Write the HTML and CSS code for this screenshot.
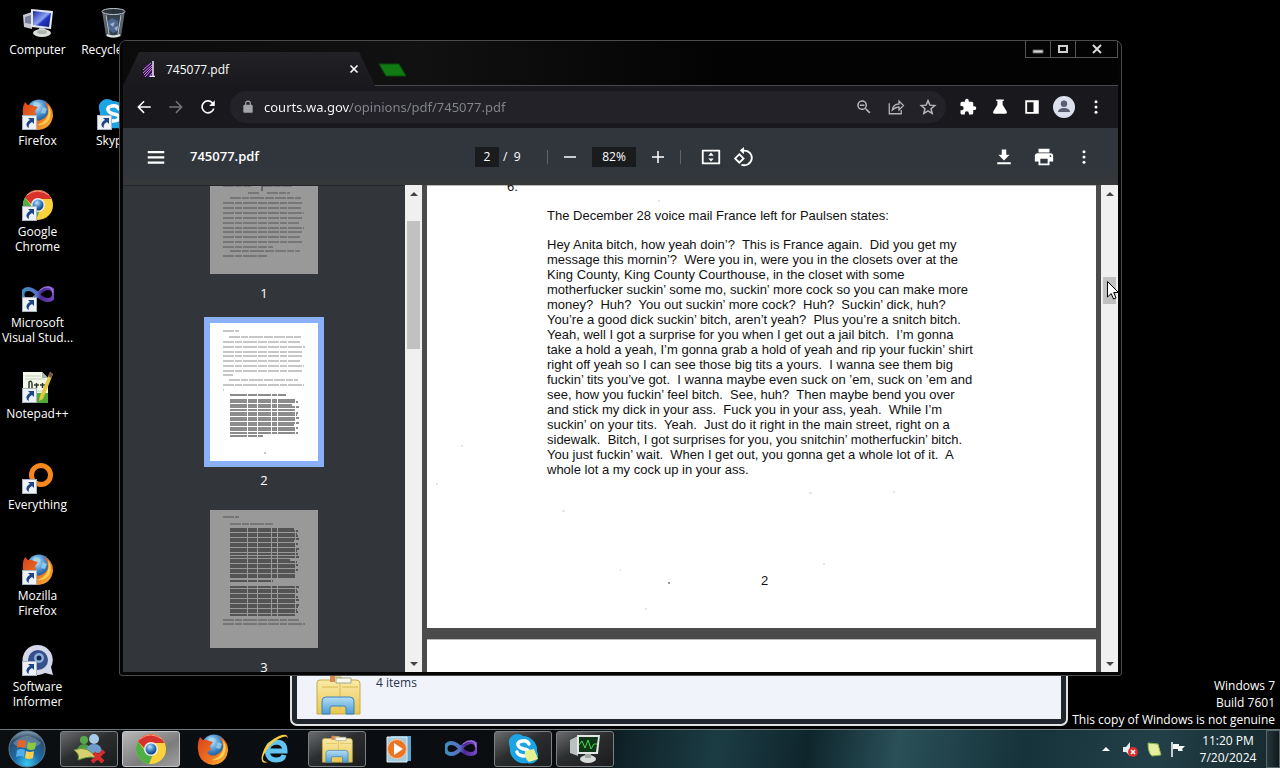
FILE: index.html
```
<!DOCTYPE html>
<html lang="en">
<head>
  <meta charset="UTF-8">
  <title>745077.pdf</title>
  <link rel="stylesheet" href="styles.css">
</head>
<body>

  <!-- shared icons -->
  <svg class="defs" aria-hidden="true">
    <defs>
      <radialGradient id="globe" cx="40%" cy="30%" r="75%">
        <stop offset="0" stop-color="#bfe6fa"/><stop offset="0.5" stop-color="#3c86c8"/><stop offset="1" stop-color="#0c2a66"/>
      </radialGradient>
      <linearGradient id="fox" x1="0" y1="0" x2="1" y2="1">
        <stop offset="0" stop-color="#d8401c"/><stop offset="0.6" stop-color="#ee7420"/><stop offset="1" stop-color="#fbc640"/>
      </linearGradient>
      <linearGradient id="screen" x1="0" y1="0" x2="1" y2="1">
        <stop offset="0" stop-color="#1626a8"/><stop offset="0.5" stop-color="#8ea4f0"/><stop offset="0.6" stop-color="#2338c4"/><stop offset="1" stop-color="#0c1878"/>
      </linearGradient>
      <linearGradient id="loop" x1="0" x2="1">
        <stop offset="0" stop-color="#3a8fc0"/><stop offset="0.45" stop-color="#5a6fc4"/><stop offset="0.6" stop-color="#4a2a96"/><stop offset="1" stop-color="#7a48c8"/>
      </linearGradient>
      <linearGradient id="paper" x1="0" y1="0" x2="0" y2="1">
        <stop offset="0" stop-color="#fbeeb0"/><stop offset="1" stop-color="#e8c650"/>
      </linearGradient>
      <linearGradient id="stand" x1="0" y1="0" x2="0" y2="1">
        <stop offset="0" stop-color="#b4ddf2"/><stop offset="1" stop-color="#4a9cd6"/>
      </linearGradient>
      <radialGradient id="orb" cx="50%" cy="90%" r="90%">
        <stop offset="0" stop-color="#38c8f0"/><stop offset="0.4" stop-color="#1c6ca8"/><stop offset="0.8" stop-color="#2c4c6c"/><stop offset="1" stop-color="#8ca4b4"/>
      </radialGradient>
    </defs>
    <symbol id="shortcut" viewBox="0 0 15 15">
      <rect width="15" height="15" fill="#eef2f6"/><rect x="0.5" y="0.5" width="14" height="14" fill="none" stroke="#a8b4c0"/>
      <path d="M6 3h6v6l-2-2c-2 1-4 3-3 6C3 11 4 7 8 5z" fill="#1c4488"/>
    </symbol>
    <symbol id="computer" viewBox="0 0 32 32">
      <path d="M1 8l9-3v17l-8-2z" fill="#c8ccd0"/><path d="M3 10l6-2v9l-6-1z" fill="#7880a0"/>
      <path d="M9 2l22 2-2 18-20-2z" fill="#e4e8ee"/><path d="M11 4l18 2-2 14-16-2z" fill="url(#screen)"/>
      <path d="M17 21h6v4h-6z" fill="#b4b8bc"/><ellipse cx="20" cy="26" rx="9" ry="4" fill="#dcdedc"/><ellipse cx="20" cy="25" rx="5" ry="2" fill="#b0b4b0"/>
    </symbol>
    <symbol id="bin" viewBox="0 0 32 32">
      <path d="M5 4h23l-4 25q-7 3-15 0z" fill="#7c8890" opacity="0.75"/><path d="M8 7h17l-3 20q-5 2-11 0z" fill="#35424e"/>
      <path d="M11 14l4-3 6 3 1 9-6 3-5-4z" fill="#4a6890"/><path d="M13 17l5-2-2 5zM17 21l4-2-1 5z" fill="#a4b4c4"/>
      <ellipse cx="16.500" cy="4.500" rx="11.500" ry="3" fill="#28323a" stroke="#c0c8cc"/>
      <path d="M9 8l3 19M24 8l-3 19" stroke="#c0c8cc"/><path d="M10 28q6 3 13 0" stroke="#e0e4e4" stroke-width="2" fill="none"/>
    </symbol>
    <symbol id="firefox" viewBox="0 0 32 32">
      <circle cx="17" cy="14" r="12.500" fill="url(#globe)"/><path d="M12 4q5 0 7 3l-3 3-5-1zM21 9l4 2-2 5-4-1z" fill="#a8dcf0" opacity="0.7"/>
      <path d="M3 4l3 3q3-1 6 1l4 1-3 4 1 4-4 2q3 5 9 3 7-3 7-9-1-7-5-10 11 5 10 15-2 13-15 14Q2 30 1 17 0 9 3 4z" fill="url(#fox)"/>
      <path d="M26 7q5 7 1 15-4 6-12 5 14-4 11-20z" fill="#fcd050"/>
    </symbol>
    <symbol id="chrome" viewBox="0 0 32 32">
      <circle cx="16" cy="16" r="15" fill="#fbd23c"/>
      <path d="M3 8.500A15 15 0 0 1 29.500 10H16a6 6 0 0 0-6 6z" fill="#d8322c"/>
      <path d="M3 8.500l7.800 10.500a6 6 0 0 0 7 2.700L14 31A15 15 0 0 1 3 8.500z" fill="#4fae48"/>
      <path d="M5 6q10-8 22 0" stroke="#f49a8c" fill="none"/>
      <circle cx="16" cy="16" r="7" fill="#e8eef0"/><circle cx="16" cy="16" r="5.500" fill="url(#globe)"/>
    </symbol>
    <symbol id="skype" viewBox="0 0 32 32">
      <path d="M9 1q5 0 7 2a14 14 0 0 1 14 15q2 4 0 9-4 5-10 3A14 14 0 0 1 3 15Q-1 4 9 1z" fill="#1ca4e4"/>
      <path d="M22 11q-2-4-7-3-5 1-4 4 1 3 6 4 6 1 5 4-1 3-6 3-5-1-6-4" fill="none" stroke="#fff" stroke-width="3.500" stroke-linecap="round"/>
    </symbol>
    <symbol id="infinity" viewBox="0 0 32 32">
      <path d="M16 16c-4-5-7-6-10-6a5 5 0 0 0 0 11c4 0 7-2 10-6 3-3 6-6 10-6a6 6 0 0 1 0 12c-4 0-7-2-10-5z" fill="none" stroke="url(#loop)" stroke-width="4"/>
      <path d="M18 11q4-4 9-3 4 1 4 6" fill="none" stroke="#a88ae0"/>
    </symbol>
    <symbol id="notepad" viewBox="0 0 32 32">
      <path d="M1 1h19l6 6v25H1z" fill="#f4f8e8"/><path d="M3 5h16M3 8h20M3 20h20M3 23h20" stroke="#c4d0c0"/><path d="M14 22h12v10H12z" fill="#54a838"/>
      <path d="M7 17v-6q3-2 3 2v4M12 14h5M14.500 12v5M18 14h5M20.500 12v5" stroke="#303830" stroke-width="1.500" fill="none"/>
      <path d="M28 1l3 2-10 25-4 2 1-5z" fill="#e4c840"/><path d="M28 1l3 2-2 4-3-2z" fill="#705848"/><path d="M20 1v6h6z" fill="#a8b4a8"/>
    </symbol>
    <symbol id="everything" viewBox="0 0 32 32">
      <circle cx="19" cy="13" r="9.500" fill="none" stroke="#f8861c" stroke-width="5"/><path d="M12 21l-6 7" stroke="#f8861c" stroke-width="5"/>
    </symbol>
    <symbol id="informer" viewBox="0 0 32 32">
      <path d="M16 1a15 15 0 0 1 13 22l2 8-8-2A15 15 0 1 1 16 1z" fill="#d4d8e8"/><circle cx="16" cy="16" r="10" fill="#35508c"/>
      <circle cx="17" cy="14" r="5" fill="#8cb0dc"/><circle cx="17" cy="14" r="2.500" fill="#16284c"/>
    </symbol>
    <symbol id="folder" viewBox="0 0 46 40">
      <path d="M2 8q0-3 3-3h10l3-3h8l3 3h12q4 0 4 3v31H2z" fill="url(#paper)" stroke="#c8a848"/>
      <path d="M15 1h5v6h-5z" fill="#d88850"/><path d="M21 3h15v5H21z" fill="#f8f8ec" stroke="#a0a890"/><path d="M25 8v26M7 12h16M27 12h16" stroke="#d8b850"/>
      <path d="M7 39V26q0-4 4-4h24q4 0 4 4v13h-8v-6q0-2-2-2H17q-2 0-2 2v6z" fill="url(#stand)" stroke="#3a84bc"/>
    </symbol>
  </svg>

  <main class="desktop">
    <nav class="shortcuts" aria-label="Desktop">
      <div class="column">
        <a href="#" class="shortcut"><svg viewBox="0 0 32 32"><use href="#computer"/></svg>Computer</a>
        <a href="#" class="shortcut"><svg viewBox="0 0 32 32"><use href="#firefox"/><use href="#shortcut" y="17" width="15" height="15"/></svg>Firefox</a>
        <a href="#" class="shortcut"><svg viewBox="0 0 32 32"><use href="#chrome"/><use href="#shortcut" y="17" width="15" height="15"/></svg>Google Chrome</a>
        <a href="#" class="shortcut"><svg viewBox="0 0 32 32"><use href="#infinity" y="-1"/><use href="#shortcut" y="17" width="15" height="15"/></svg>Microsoft Visual Stud...</a>
        <a href="#" class="shortcut"><svg viewBox="0 0 32 32"><use href="#notepad"/><use href="#shortcut" y="17" width="15" height="15"/></svg>Notepad++</a>
        <a href="#" class="shortcut"><svg viewBox="0 0 32 32"><use href="#everything"/><use href="#shortcut" y="17" width="15" height="15"/></svg>Everything</a>
        <a href="#" class="shortcut"><svg viewBox="0 0 32 32"><use href="#firefox"/><use href="#shortcut" y="17" width="15" height="15"/></svg>Mozilla Firefox</a>
        <a href="#" class="shortcut"><svg viewBox="0 0 32 32"><use href="#informer"/><use href="#shortcut" y="17" width="15" height="15"/></svg>Software Informer</a>
      </div>
      <div class="column">
        <a href="#" class="shortcut"><svg viewBox="0 0 32 32"><use href="#bin"/></svg>Recycle Bin</a>
        <a href="#" class="shortcut"><svg viewBox="0 0 32 32"><use href="#skype"/><use href="#shortcut" y="17" width="15" height="15"/></svg>Skype</a>
      </div>
    </nav>

    <div class="watermark">
      <p>Windows 7</p>
      <p>Build 7601</p>
      <p>This copy of Windows is not genuine</p>
    </div>

    <section class="explorer" aria-label="Explorer">
      <div class="details">
        <svg class="folder" viewBox="0 0 46 40"><use href="#folder"/></svg>
        <span>4 items</span>
      </div>
    </section>

    <section class="browser" aria-label="Chrome">
      <header class="titlebar">
        <div class="tab">
          <svg class="favicon" viewBox="0 0 16 16"><path d="M3 3h8v13H1z" fill="#35104a"/><path d="M1 9l8-7M1 12l9-8M2 14l8-8M3 16l7-8M7 16l4-5" stroke="#c088e0"/><path d="M11 0v15M8 15.500h5" stroke="#f0e0ff" stroke-width="1.500"/></svg>
          <span class="tab-title">745077.pdf</span>
          <button class="tab-close" aria-label="Close tab"><svg viewBox="0 0 10 10"><path d="M1.500 1.500l7 7M8.500 1.500l-7 7" stroke="#fff" stroke-width="1.600"/></svg></button>
        </div>
        <button class="new-tab" aria-label="New tab"><svg viewBox="0 0 30 14"><path d="M1 1h20l7 12H8z" fill="#117a12" stroke="#0b4a0c"/></svg></button>
        <div class="caption">
          <button aria-label="Minimize"><svg viewBox="0 0 12 12"><path d="M1 7h10v3H1z" fill="#d8d8d8" stroke="#666"/></svg></button>
          <button aria-label="Maximize"><svg viewBox="0 0 12 12"><path d="M2 3h8v6H2z" fill="none" stroke="#d0d0d0" stroke-width="2"/></svg></button>
          <button class="close" aria-label="Close"><svg viewBox="0 0 12 12"><path d="M2 2l8 8M10 2l-8 8" stroke="#d8d8d8" stroke-width="2"/></svg></button>
        </div>
      </header>

      <div class="toolbar">
        <button class="icon-btn" aria-label="Back"><svg viewBox="0 0 24 24"><path d="M21 11H6.800l6-6L11.400 3.500 3 12l8.400 8.500 1.400-1.500-6-6H21z"/></svg></button>
        <button class="icon-btn dim" aria-label="Forward"><svg viewBox="0 0 24 24"><path d="M3 11h14.200l-6-6 1.400-1.500L21 12l-8.400 8.500-1.400-1.500 6-6H3z"/></svg></button>
        <button class="icon-btn" aria-label="Reload"><svg viewBox="0 0 24 24"><path d="M18.500 5.500A9 9 0 1 0 20.800 14h-2.300a6.800 6.800 0 1 1-1.600-6.900L13.500 10.500H21V3z"/></svg></button>
        <div class="omnibox">
          <svg class="lock" viewBox="0 0 24 24"><path d="M18 8h-1V6A5 5 0 0 0 7 6v2H6a2 2 0 0 0-2 2v10c0 1.100.9 2 2 2h12a2 2 0 0 0 2-2V10a2 2 0 0 0-2-2zM9 6a3 3 0 0 1 6 0v2H9z"/></svg>
          <input type="text" aria-label="Address" value="courts.wa.gov/opinions/pdf/745077.pdf">
          <button class="icon-btn soft" aria-label="Zoom"><svg viewBox="0 0 24 24"><path d="M15.500 14h-.8l-.3-.3A6.500 6.500 0 1 0 13.700 14.400l.3.300v.8l5 5 1.500-1.500zM9.500 14a4.500 4.500 0 1 1 0-9 4.500 4.500 0 0 1 0 9zM6.500 8.500h6v2h-6z"/></svg></button>
          <button class="icon-btn soft" aria-label="Share"><svg viewBox="0 0 24 24"><path d="M3 7v14h16v-5M7 16c1-6 5-8 9-8V4l6 6-6 6v-4c-4 0-6 1-9 4z" fill="none" stroke="currentColor" stroke-width="1.700"/></svg></button>
          <button class="icon-btn soft" aria-label="Bookmark"><svg viewBox="0 0 24 24"><path d="M12 3.500l2.500 6 6.500.5-5 4.200 1.600 6.300-5.600-3.400-5.600 3.400L8 14.200 3 10l6.500-.5z" fill="none" stroke="currentColor" stroke-width="2"/></svg></button>
        </div>
        <button class="icon-btn" aria-label="Extensions"><svg viewBox="0 0 24 24"><path d="M20.500 11H19V7a2 2 0 0 0-2-2h-4V3.500a2.500 2.500 0 0 0-5 0V5H4a2 2 0 0 0-2 2v3.800h1.500a2.700 2.700 0 0 1 0 5.400H2V20c0 1.100.9 2 2 2h3.800v-1.500a2.700 2.700 0 0 1 5.400 0V22H17a2 2 0 0 0 2-2v-4h1.500a2.500 2.500 0 0 0 0-5z"/></svg></button>
        <button class="icon-btn" aria-label="Labs"><svg viewBox="0 0 24 24"><path d="M7 2h10v2h-1.500v5L21 18q1 3-2 3H5q-3 0-2-3l5.500-9V4H7z"/></svg></button>
        <button class="icon-btn" aria-label="Side panel"><svg viewBox="0 0 24 24"><path d="M3 3h18v18H3zM5.500 5.500v13H14v-13z" fill-rule="evenodd"/></svg></button>
        <button class="icon-btn" aria-label="Profile"><svg class="avatar" viewBox="0 0 24 24"><circle cx="12" cy="12" r="12" fill="#dcdfec"/><circle cx="12" cy="8.500" r="3.500" fill="#5b5d70"/><path d="M5.500 17.500c0-6 13-6 13 0z" fill="#5b5d70"/></svg></button>
        <button class="icon-btn" aria-label="Menu"><svg viewBox="0 0 24 24"><circle cx="12" cy="5" r="2"/><circle cx="12" cy="12" r="2"/><circle cx="12" cy="19" r="2"/></svg></button>
      </div>

      <div class="pdf-toolbar">
        <div class="pdf-left">
          <button class="icon-btn" aria-label="Menu"><svg viewBox="0 0 24 24"><path d="M1 4h22v3H1zM1 11h22v3H1zM1 18h22v3H1z"/></svg></button>
          <h1>745077.pdf</h1>
        </div>
        <div class="pdf-center">
          <input class="page-input" type="text" aria-label="Page number" value="2">
          <span class="page-total">/&nbsp; 9</span>
          <i class="divider"></i>
          <button class="icon-btn" aria-label="Zoom out"><svg viewBox="0 0 24 24"><path d="M4 11h16v2H4z"/></svg></button>
          <input class="zoom-input" type="text" aria-label="Zoom level" value="82%">
          <button class="icon-btn" aria-label="Zoom in"><svg viewBox="0 0 24 24"><path d="M11 4h2v7h7v2h-7v7h-2v-7H4v-2h7z"/></svg></button>
          <i class="divider wide"></i>
          <button class="icon-btn" aria-label="Fit to page"><svg class="big" viewBox="0 0 24 24"><path d="M3 4h18a1 1 0 0 1 1 1v14a1 1 0 0 1-1 1H3a1 1 0 0 1-1-1V5a1 1 0 0 1 1-1zM4 6v12h16V6zM12 7l3 3.500H9zM12 17l-3-3.500h6z" fill-rule="evenodd"/></svg></button>
          <button class="icon-btn" aria-label="Rotate"><svg class="big" viewBox="0 0 24 24"><path d="M8 7.500L2 13.500l6 6 6-6zM4.800 13.500L8 10.300l3.200 3.200L8 16.700zM13 4V1L8.500 5l4.500 4V6a7 7 0 1 1-2 13.500l-1.500 1.500A9 9 0 1 0 13 4z" fill-rule="evenodd"/></svg></button>
        </div>
        <div class="pdf-right">
          <button class="icon-btn" aria-label="Download"><svg viewBox="0 0 24 24"><path d="M19.500 9H15V2H9v7H4.500l7.500 7.500zM3 19h18v2.500H3z"/></svg></button>
          <button class="icon-btn" aria-label="Print"><svg class="big" viewBox="0 0 24 24"><path d="M19 8H5a3 3 0 0 0-3 3v6h4v4h12v-4h4v-6a3 3 0 0 0-3-3zm-3 11H8v-5h8zm3-7a1 1 0 1 1 0-2 1 1 0 0 1 0 2zM18 3H6v4h12z"/></svg></button>
          <button class="icon-btn" aria-label="More actions"><svg viewBox="0 0 24 24"><circle cx="12" cy="5" r="2"/><circle cx="12" cy="12" r="2"/><circle cx="12" cy="19" r="2"/></svg></button>
        </div>
      </div>

      <div class="viewer">
        <aside class="thumbs">
          <a href="#" class="thumb">
            <svg viewBox="0 0 108 138">
              <path class="greek" d="M13 50h28M52 50h30M38 57h12M57 57h23M20 62h71M13 67h79M13 72h78M13 77h81M13 82h80M13 87h76M13 92h81M13 96h80M13 101h77M13 106h79M13 111h50M20 115h70M13 120h44"/>
              <path d="M52 45v10" stroke="#333"/>
            </svg>
            <span>1</span>
          </a>
          <a href="#" class="thumb current">
            <svg viewBox="0 0 108 138">
              <path class="greek" d="M13 8h16M19 14h72M13 19h77M13 24h82M13 29h80M13 33h79M13 38h77M13 43h81M13 48h80M13 52h10M19 57h69M13 62h81M13 67h1"/>
              <path class="greek bold" d="M20 72h56M20 77h65M20 79h68M20 82h62M20 84h69M20 87h66M20 90h68M20 92h67M20 95h69M20 97h66M20 100h69M20 102h64M20 105h68M20 107h66M20 110h68M20 113h33"/>
              <path class="greek" d="M54 130h2"/>
            </svg>
            <span>2</span>
          </a>
          <a href="#" class="thumb">
            <svg viewBox="0 0 108 138">
              <path class="greek" d="M13 7h16M20 14h43M13 110h76M13 114h82"/>
              <path class="greek bold" d="M20 19h64M20 21h68M20 24h67M20 26h68M20 29h69M20 31h64M20 34h68M20 36h66M20 39h69M20 41h67M20 44h68M20 47h69M20 50h60M20 52h67M20 55h68M20 57h65M20 60h68M20 62h66M20 65h65M20 67h66M20 71h43M20 77h69M20 80h67M20 82h68M20 85h65M20 87h68M20 90h69M20 92h66M20 95h69M20 97h68M20 100h67M20 102h68M20 105h66"/>
            </svg>
            <span>3</span>
          </a>
        </aside>
        <div class="scrollbar side-scroll">
          <button class="up" aria-label="Scroll up"></button>
          <div class="handle"></div>
          <button class="down" aria-label="Scroll down"></button>
        </div>

        <div class="pages">
          <article class="page">
            <svg class="specks" viewBox="0 0 669 443" aria-hidden="true"><path d="M231 15h2M135 325h3M34 260h2M9 298h2M193 384h1M382 307h3M466 306h2M218 423h2M396 378h2" stroke="#ccc"/><path d="M241 397h2" stroke="#333"/></svg>
            <p class="number">6.</p>
            <p>The December 28 voice mail France left for Paulsen states:</p>
            <blockquote>Hey Anita bitch, how yeah doin’?  This is France again.  Did you get my
message this mornin’?  Were you in, were you in the closets over at the
King County, King County Courthouse, in the closet with some
motherfucker suckin’ some mo, suckin’ more cock so you can make more
money?  Huh?  You out suckin’ more cock?  Huh?  Suckin’ dick, huh?
You’re a good dick suckin’ bitch, aren’t yeah?  Plus you’re a snitch bitch.
Yeah, well I got a surprise for you when I get out a jail bitch.  I’m gonna
take a hold a yeah, I’m gonna grab a hold of yeah and rip your fuckin’ shirt
right off yeah so I can see those big tits a yours.  I wanna see them big
fuckin’ tits you’ve got.  I wanna maybe even suck on ’em, suck on ’em and
see, how you fuckin’ feel bitch.  See, huh?  Then maybe bend you over
and stick my dick in your ass.  Fuck you in your ass, yeah.  While I’m
suckin’ on your tits.  Yeah.  Just do it right in the main street, right on a
sidewalk.  Bitch, I got surprises for you, you snitchin’ motherfuckin’ bitch.
You just fuckin’ wait.  When I get out, you gonna get a whole lot of it.  A
whole lot a my cock up in your ass.</blockquote>
            <footer>2</footer>
          </article>
          <article class="page next"></article>
        </div>
        <div class="scrollbar main-scroll">
          <button class="up" aria-label="Scroll up"></button>
          <div class="handle"></div>
          <button class="down" aria-label="Scroll down"></button>
        </div>
      </div>
    </section>
  </main>

  <footer class="taskbar">
    <button class="start" aria-label="Start"><svg viewBox="0 0 38 38"><circle cx="19" cy="19" r="18" fill="url(#orb)" stroke="#5c7c90"/><path d="M5 13q14-14 28 0-4 5-14 5T5 13z" fill="#fff" opacity="0.25"/><path d="M10 11q4-2 8 0l-1 7q-4-2-8 0z" fill="#e8622c"/><path d="M20 12q4 2 8 0l-1 7q-4 2-8 0z" fill="#8cc840"/><path d="M9 20q4-2 8 0l-1 7q-4-2-8 0z" fill="#50b0ec"/><path d="M18 21q4 2 8 0l-1 7q-4 2-8 0z" fill="#fcd04c"/></svg></button>
    <button class="task open" aria-label="Messenger"><svg viewBox="0 0 32 32"><circle cx="11" cy="7" r="4" fill="#58a848"/><path d="M4 21q0-10 7-10t7 10z" fill="#4c9c40"/><circle cx="21" cy="6" r="5" fill="#a8cce8"/><path d="M13 20q0-9 8-9t8 9z" fill="#6c9ccc"/><path d="M1 17q14-6 24 10-4-6-20 0 2-6-4-10z" fill="#d8d070" stroke="#5c9838"/><path d="M21 20l9 9M31 18L19 29" stroke="#d82c2c" stroke-width="4"/></svg></button>
    <button class="task active" aria-label="Google Chrome"><svg viewBox="0 0 32 32"><use href="#chrome"/></svg></button>
    <button class="task" aria-label="Firefox"><svg viewBox="0 0 32 32"><use href="#firefox"/></svg></button>
    <button class="task" aria-label="Internet Explorer"><svg viewBox="0 0 32 32"><path d="M8 18h18q0-9-9-9-8 1-9 9 1 9 9 9 7 0 8-5" fill="none" stroke="#62c4f0" stroke-width="5"/><path d="M28 8q3-9-8-5Q6 9 3 22q-2 10 6 7Q0 29 7 18 14 7 24 4q6-2 4 4z" fill="#f8cc3c"/></svg></button>
    <button class="task open" aria-label="Explorer"><svg viewBox="0 0 46 40"><use href="#folder"/></svg></button>
    <button class="task" aria-label="Media Player"><svg viewBox="0 0 32 32"><path d="M8 3h20v25H8z" fill="#5ca4d0"/><path d="M4 4h20v25H4z" fill="#a4ccdc" stroke="#e0f0f8"/><circle cx="14" cy="16" r="9.500" fill="#ec7424" stroke="#f8c8a0"/><path d="M11 10l9 6-9 6z" fill="#fff"/></svg></button>
    <button class="task" aria-label="Visual Studio"><svg viewBox="0 0 32 32"><use href="#infinity"/></svg></button>
    <button class="task open" aria-label="Skype"><svg viewBox="0 0 32 32"><use href="#skype"/><path d="M18 18l9-2 4 10-9 3q-5-4-4-11z" fill="#e8f090"/></svg></button>
    <button class="task open" aria-label="Task Manager"><svg viewBox="0 0 32 32"><path d="M1 7l8-4v20l-8-3z" fill="#b8c0c0"/><path d="M8 2h23l-2 19H8z" fill="#e4e8e4"/><path d="M10 4h19l-2 15H10z" fill="#103818"/><path d="M10 12l3-4 3 7 3-8 3 9 3-5h3" fill="none" stroke="#48d850"/><ellipse cx="19" cy="26" rx="8" ry="4" fill="#d8dcd8"/><path d="M16 21h6v4h-6z" fill="#a0a8a4"/></svg></button>

    <div class="tray">
      <button aria-label="Show hidden icons"><svg viewBox="0 0 16 16"><path d="M8 6l4 4H4z" fill="#fff"/></svg></button>
      <button aria-label="Volume muted"><svg viewBox="0 0 16 16"><path d="M1 6h3l4-5v14l-4-4H1z" fill="#e8ecec"/><circle cx="11" cy="11" r="5" fill="#d83030"/><path d="M9 9l4 4M13 9l-4 4" stroke="#fff" stroke-width="1.500"/></svg></button>
      <button aria-label="Device"><svg viewBox="0 0 16 16"><path d="M2 2l10 1 3 11-9 1q-4-3-4-13z" fill="#e4f0a0" stroke="#90b050"/></svg></button>
      <button aria-label="Action Center"><svg viewBox="0 0 16 16"><path d="M2 1v15" stroke="#fff" stroke-width="1.500"/><path d="M3 3h6v2h6l-3 3 1 2H8V8H3z" fill="#f4f8f8"/></svg></button>
    </div>
    <div class="clock"><span>11:20 PM</span><span>7/20/2024</span></div>
    <button class="show-desktop" aria-label="Show desktop"></button>
  </footer>

  <svg class="cursor" viewBox="0 0 12 19" aria-hidden="true"><path d="M.5.500v15.500l3.700-3.500 2.300 5.500 2.500-1-2.300-5.500h4.800z" fill="#fff" stroke="#000"/></svg>

</body>
</html>
```

FILE: styles.css
```
* {
  box-sizing: border-box;
}

body {
  margin: 0;
  height: 100vh;
  display: flex;
  flex-direction: column;
  overflow: hidden;
  background: #000;
  color: #fff;
  font: 12px/15px "Open Sans", "Noto Sans", sans-serif;
}

button {
  padding: 0;
  border: none;
  background: none;
  color: inherit;
  display: flex;
  align-items: center;
  justify-content: center;
}

input {
  border: none;
  padding: 0;
  color: inherit;
  font: inherit;
}

p, h1, blockquote {
  margin: 0;
}

.defs {
  position: absolute;
  width: 0;
  height: 0;
}

.desktop {
  flex: 1;
  position: relative;
  min-height: 0;
}

/* desktop icons */
.shortcuts {
  display: flex;
}

.column {
  width: 75px;
}

.shortcut {
  height: 91px;
  padding-top: 7px;
  display: block;
  color: #fff;
  text-align: center;
  text-decoration: none;
}

.shortcut svg {
  display: block;
  width: 32px;
  height: 32px;
  margin: 0 auto 3px;
}

.watermark {
  position: absolute;
  right: 5px;
  bottom: 1px;
  text-align: right;
  line-height: 17px;
}

/* explorer window, mostly hidden */
.explorer {
  position: absolute;
  left: 290px;
  right: 212px;
  bottom: 3px;
  height: 120px;
  padding: 5px;
  border: 2px solid #dfe3e6;
  border-radius: 7px;
  background: #20262b;
}

.details {
  height: 100%;
  padding: 0 18px 4px;
  display: flex;
  align-items: flex-end;
  gap: 15px;
  background: #f0f4fa;
  color: #2a3350;
}

.folder {
  width: 46px;
  height: 40px;
}

.details span {
  align-self: flex-end;
  padding-bottom: 25px;
}

/* browser window */
.browser {
  position: absolute;
  left: 119px;
  right: 158px;
  top: 40px;
  bottom: 53px;
  padding: 0 3px 3px;
  display: flex;
  flex-direction: column;
  border: 1px solid #4c4c4c;
  border-radius: 7px 7px 3px 3px;
  background: #050505;
}

.titlebar {
  height: 45px;
  display: flex;
  align-items: flex-end;
  background: linear-gradient(to right, #0b0b0b, #111 30%, #030303 60%);
  border-bottom: 1px solid #48484a;
}

.tab {
  width: 252px;
  height: 34px;
  margin-bottom: -1px;
  padding: 0 13px 0 19px;
  display: flex;
  align-items: center;
  gap: 8px;
  background: linear-gradient(#222226, #18181d);
  clip-path: polygon(16px 0, 236px 0, 252px 100%, 0 100%);
}

.favicon {
  width: 16px;
  height: 16px;
}

.tab-title {
  flex: 1;
}

.tab-close {
  width: 16px;
  height: 16px;
}

.tab-close svg {
  width: 10px;
  height: 10px;
}

.new-tab {
  margin: 0 0 8px 3px;
}

.new-tab svg {
  width: 30px;
  height: 14px;
}

.caption {
  align-self: flex-start;
  margin-left: auto;
  display: flex;
  border: 1px solid #555;
  border-top: none;
}

.caption button {
  width: 25px;
  height: 16px;
  border-right: 1px solid #555;
}

.caption .close {
  width: 41px;
  border-right: none;
}

.caption svg {
  width: 12px;
  height: 12px;
}

.icon-btn {
  width: 32px;
  height: 32px;
  flex: none;
  color: #fff;
}

.icon-btn svg {
  width: 18px;
  height: 18px;
  fill: currentColor;
}

.icon-btn .big,
.icon-btn .avatar {
  width: 22px;
  height: 22px;
}

.icon-btn.dim {
  color: #74757a;
}

.icon-btn.soft {
  color: #b4b5ba;
}

.toolbar {
  height: 42px;
  padding: 0 6px 0 5px;
  display: flex;
  align-items: center;
  background: #18181d;
}

.omnibox {
  flex: 1;
  height: 32px;
  margin: 0 6px;
  padding: 0 2px 0 11px;
  display: flex;
  align-items: center;
  border-radius: 16px;
  background: #222228;
}

.lock {
  width: 14px;
  height: 14px;
  margin-right: 9px;
  fill: #a4a5aa;
}

/* host part white, path grey */
.omnibox input {
  flex: 1;
  min-width: 0;
  height: 24px;
  font: 13px "Noto Sans", sans-serif;
  color: transparent;
  background: linear-gradient(to right, #fff 86px, #85868c 86px);
  -webkit-background-clip: text;
  background-clip: text;
}

.pdf-toolbar {
  height: 57px;
  padding: 0 18px 0 17px;
  display: flex;
  align-items: center;
  background: linear-gradient(#30363c 70%, #37383a);
}

.pdf-left, .pdf-right {
  flex: 1;
  display: flex;
  align-items: center;
}

.pdf-right {
  justify-content: flex-end;
  gap: 8px;
}

.pdf-left h1 {
  margin-left: 18px;
  font-size: 13px;
  font-weight: 600;
}

.pdf-center {
  margin-right: 6px;
  display: flex;
  align-items: center;
}

.pdf-center input {
  height: 20px;
  text-align: center;
  background: #191b1d;
}

.page-input {
  width: 24px;
}

.page-total {
  width: 20px;
  margin: 0 18px 0 4px;
}

.zoom-input {
  width: 44px;
  margin: 0 6px;
}

.divider {
  width: 1px;
  height: 14px;
  margin: 0 6px;
  background: #5e6468;
}

.divider.wide {
  margin-right: 14px;
}

.viewer {
  flex: 1;
  min-height: 0;
  display: flex;
  background: #4b4b4c;
}

.thumbs {
  width: 282px;
  overflow: hidden;
  background: #32363b;
  border-top: 1px solid #24272a;
}

.thumb {
  display: flex;
  flex-direction: column;
  align-items: center;
  gap: 11px;
  margin-bottom: 22px;
  color: #fff;
  font-size: 13px;
  line-height: 16px;
  text-decoration: none;
}

/* list is scrolled part way down the first page */
.thumb:first-child {
  margin-top: -50px;
}

.thumb svg {
  width: 108px;
  height: 138px;
  background: #999;
}

.thumb.current svg {
  background: #fff;
  outline: 6px solid #8ab0f8;
}

.greek {
  stroke: #000;
  stroke-opacity: 0.45;
  stroke-width: 1;
  stroke-dasharray: 11 1 7 1 14 1 9 1;
}

.greek.bold {
  stroke-width: 2;
  stroke-dasharray: 17 1 9 1 13 1 5 1;
}

.scrollbar {
  width: 17px;
  flex: none;
  display: flex;
  flex-direction: column;
  background: #f0f0f0;
}

.scrollbar button {
  width: 17px;
  height: 17px;
}

.scrollbar button::before {
  content: "";
  border: 4px solid transparent;
}

.scrollbar .up::before {
  border-top: none;
  border-bottom-color: #444;
}

.scrollbar .down {
  margin-top: auto;
}

.scrollbar .down::before {
  border-bottom: none;
  border-top-color: #444;
}

.handle {
  margin: 19px 2px 0;
  height: 128px;
  background: #c1c1c1;
}

.main-scroll .handle {
  margin-top: 75px;
  height: 27px;
}

.pages {
  flex: 1;
  padding: 0 5px;
  display: flex;
  flex-direction: column;
  gap: 11px;
  overflow: hidden;
}

.page {
  position: relative;
  height: 443px;
  flex: none;
  padding: 0 80px;
  background: #fff;
  border-top: 1px solid #bbb;
  color: #111;
  font: 13px/15px "Liberation Sans", sans-serif;
}

.page p, .page blockquote {
  margin-left: 40px;
}

.page .number {
  margin: -7px 0 14px;
}

.page blockquote {
  margin-top: 14px;
  white-space: pre;
}

.page footer {
  margin-top: 96px;
  padding-left: 6px;
  text-align: center;
}

.page.next {
  flex: 1;
}

.specks {
  position: absolute;
  left: 0;
  top: 0;
  width: 100%;
}

/* taskbar */
.taskbar {
  height: 39px;
  display: flex;
  align-items: center;
  gap: 4px;
  border-top: 1px solid #6d787c;
  background: linear-gradient(100deg, #0b0f12, #0a0c10 45%, #10242a 49%, #1c3c44 56%, #0f252c 63%, #2a5058 70%, #16323a 80%, #234048 90%, #16282e);
}

.start {
  width: 38px;
  height: 38px;
  margin: 0 10px 0 8px;
}

.start svg {
  width: 38px;
  height: 38px;
}

.task {
  width: 58px;
  height: 36px;
  border: 1px solid transparent;
  border-radius: 3px;
}

.task svg {
  width: 32px;
  height: 32px;
}

.task.open {
  border-color: #7c8284;
  background: linear-gradient(150deg, #6a6c6e, #2b2d2f 45%, #1a1c1e);
}

.task.active {
  border-color: #c4c6c8;
  background: linear-gradient(150deg, #b8b8b8, #7c7c7c 60%, #a0a0a0);
}

.tray {
  margin-left: auto;
  display: flex;
  gap: 8px;
}

.tray button, .tray svg {
  width: 16px;
  height: 16px;
}

.clock {
  width: 76px;
  margin-right: -4px;
  display: flex;
  flex-direction: column;
  text-align: center;
  line-height: 17px;
}

.show-desktop {
  width: 14px;
  height: 38px;
  border: 1px solid #55676c;
  background: linear-gradient(to right, #26363a, #101a1e);
}

.cursor {
  position: absolute;
  left: 1107px;
  top: 281px;
  width: 12px;
  height: 19px;
}
```
